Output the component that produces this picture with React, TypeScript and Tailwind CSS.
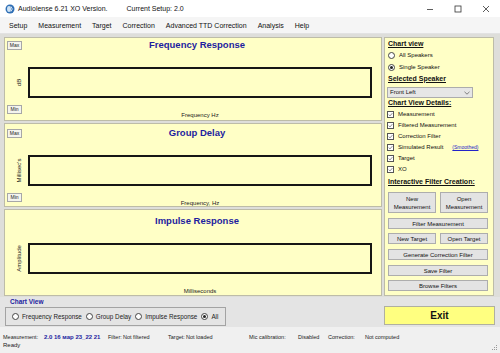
import React from 'react';

const sans = "font-['Liberation_Sans',Arial,sans-serif]";

function SmallBtn({ children, className = '' }: { children: React.ReactNode; className?: string }) {
  return (
    <div
      className={`w-[15px] h-[9px] border border-[#a7a7a7] bg-[#f4f4ee] text-[5px] leading-[7px] text-center text-[#222] ${className}`}
    >
      {children}
    </div>
  );
}

function WinBtn({ children, className = '' }: { children: React.ReactNode; className?: string }) {
  return (
    <div
      className={`flex items-center justify-center text-center border border-[#adadad] bg-[#e3e3e3] text-[6px] leading-[8px] text-[#111] ${className}`}
    >
      {children}
    </div>
  );
}

function Radio({ checked = false }: { checked?: boolean }) {
  return (
    <div className="w-[7px] h-[7px] rounded-full border border-[#444] bg-white flex items-center justify-center shrink-0">
      {checked && <div className="w-[3px] h-[3px] rounded-full bg-[#222]" />}
    </div>
  );
}

function Check() {
  return (
    <div className="w-[7px] h-[7px] border border-[#555] bg-white flex items-center justify-center shrink-0">
      <svg width="5" height="5" viewBox="0 0 10 10">
        <path d="M1.5 5.2 L4 7.8 L8.8 2.2" fill="none" stroke="#333" strokeWidth="1.1" />
      </svg>
    </div>
  );
}

interface ChartPanelProps {
  title: string;
  ylabel: string;
  xlabel: string;
  maxMin?: boolean;
  className: string;
}

function ChartPanel({ title, ylabel, xlabel, maxMin = true, className }: ChartPanelProps) {
  return (
    <div className={`flex flex-col border border-[#bdbca8] bg-[#ffffc6] ${className}`}>
      {/* Header */}
      <div className="flex h-[29px] shrink-0">
        <div className="w-[18px] shrink-0">{maxMin && <SmallBtn className="ml-[2px] mt-[3px]">Max</SmallBtn>}</div>
        <div className="flex-1 mr-[10px] mt-[1px] text-center text-[9.5px] leading-[12px] font-bold text-[#1d1d9f]">
          {title}
        </div>
      </div>

      {/* Plot */}
      <div className="flex h-[31px] shrink-0">
        <div className="w-[23px] pl-[6px] flex items-center justify-center shrink-0">
          <span className="-rotate-90 whitespace-nowrap text-[6px] leading-[7px] text-[#222]">{ylabel}</span>
        </div>
        <div className="flex-1 mr-[9px] border-2 border-[#161616]" />
      </div>

      {/* Footer */}
      <div className="flex shrink-0">
        <div className="w-[23px] shrink-0">{maxMin && <SmallBtn className="ml-[2px] mt-[7px]">Min</SmallBtn>}</div>
        <div className="flex-1 mr-[9px] mt-[13px] text-center text-[6px] leading-[8px] text-[#222]">{xlabel}</div>
      </div>
    </div>
  );
}

export default function App() {
  return (
    <div className={`w-[500px] h-[353px] overflow-hidden flex flex-col bg-[#f0f0f0] text-[#111] ${sans}`}>
      {/* Title bar */}
      <div className="h-[17px] shrink-0 bg-white flex items-center">
        <svg width="10" height="10" viewBox="0 0 20 20" className="ml-[5px]">
          <circle cx="10" cy="10" r="9" fill="#2f6fb5" />
          <ellipse cx="8" cy="10" rx="4" ry="6" fill="#cfe3f5" />
          <path d="M12 5 Q17 10 12 15" fill="none" stroke="#ffffff" strokeWidth="1.6" />
        </svg>
        <span className="ml-[3px] text-[7px] leading-[9px]">Audiolense 6.21 XO Version.</span>
        <span className="ml-[19px] text-[7px] leading-[9px]">Current Setup: 2.0</span>
        <div className="ml-auto flex items-center">
          <svg width="8" height="8" viewBox="0 0 8 8" className="mr-[20px]">
            <line x1="1" y1="4.5" x2="7" y2="4.5" stroke="#333" strokeWidth="0.8" />
          </svg>
          <svg width="8" height="8" viewBox="0 0 8 8" className="mr-[20px]">
            <rect x="1" y="1" width="6" height="6" fill="none" stroke="#333" strokeWidth="0.8" />
          </svg>
          <svg width="8" height="8" viewBox="0 0 8 8" className="mr-[10px]">
            <line x1="1" y1="1" x2="7" y2="7" stroke="#333" strokeWidth="0.8" />
            <line x1="7" y1="1" x2="1" y2="7" stroke="#333" strokeWidth="0.8" />
          </svg>
        </div>
      </div>

      {/* Menu bar */}
      <div className="h-[17px] shrink-0 bg-[#f5f5f5] flex items-center pl-[9px] gap-[11px] text-[7px] leading-[9px] border-b border-[#e2e2e2]">
        <span>Setup</span>
        <span>Measurement</span>
        <span>Target</span>
        <span>Correction</span>
        <span>Advanced TTD Correction</span>
        <span>Analysis</span>
        <span>Help</span>
      </div>

      {/* Main area */}
      <div className="h-[263px] shrink-0 flex pt-[3px] bg-[#dededa]">
        <div className="ml-[4px] w-[378px] flex flex-col gap-[2px]">
          <ChartPanel className="h-[84px]" title="Frequency Response" ylabel="dB" xlabel="Frequency Hz" />
          <ChartPanel className="h-[84px] pt-[2px]" title="Group Delay" ylabel="Millisec's" xlabel="Frequency, Hz" />
          <ChartPanel className="h-[87px] pt-[4px]" title="Impulse Response" ylabel="Amplitude" xlabel="Milliseconds" maxMin={false} />
        </div>

        {/* Right side panel */}
        <div className="ml-[2px] w-[110px] h-[259px] border border-[#bdbca8] bg-[#ffffc6] flex flex-col pt-[1px] pl-[3px] pr-[5px] text-[6px] text-[#111]">
          <div className="h-[11px] flex items-center text-[7px] font-bold underline">Chart view</div>
          <div className="h-[11px] flex items-center gap-[4px]">
            <Radio />
            <span>All Speakers</span>
          </div>
          <div className="h-[12px] flex items-center gap-[4px]">
            <Radio checked />
            <span>Single Speaker</span>
          </div>
          <div className="h-[12px] flex items-center text-[7px] font-bold underline">Selected Speaker</div>
          <div className="mt-[2px] -ml-[1px] w-[86px] h-[11px] border border-[#acacac] bg-[#e6e6e6] flex items-center justify-between px-[2px]">
            <span>Front Left</span>
            <svg width="6" height="4" viewBox="0 0 6 4">
              <path d="M0.5 0.8 L3 3.2 L5.5 0.8" fill="none" stroke="#555" strokeWidth="0.7" />
            </svg>
          </div>
          <div className="h-[11px] flex items-center text-[7px] font-bold underline">Chart View Details:</div>
          {['Measurement', 'Filtered Measurement', 'Correction Filter', 'Simulated Result', 'Target', 'XO'].map((label) => (
            <div key={label} className="h-[11px] flex items-center gap-[4px] -ml-[1px]">
              <Check />
              <span>{label}</span>
              {label === 'Simulated Result' && (
                <span className="ml-[5px] text-[5px] text-[#2323c8] underline">(Smoothed)</span>
              )}
            </div>
          ))}
          <div className="h-[14px] flex items-center text-[7px] font-bold underline">Interactive Filter Creation:</div>
          <div className="mt-[3px] grid grid-cols-2 gap-[4px] h-[21px]">
            <WinBtn>
              New
              <br />
              Measurement
            </WinBtn>
            <WinBtn>
              Open
              <br />
              Measurement
            </WinBtn>
          </div>
          <WinBtn className="mt-[5px] h-[11px]">Filter Measurement</WinBtn>
          <div className="mt-[4px] grid grid-cols-2 gap-[4px] h-[11px]">
            <WinBtn>New Target</WinBtn>
            <WinBtn>Open Target</WinBtn>
          </div>
          <WinBtn className="mt-[5px] h-[11px]">Generate Correction Filter</WinBtn>
          <WinBtn className="mt-[5px] h-[11px]">Save Filter</WinBtn>
          <WinBtn className="mt-[4px] h-[11px]">Browse Filters</WinBtn>
        </div>
      </div>

      {/* Bottom controls */}
      <div className="h-[30px] shrink-0 flex bg-[#e4e4e4]">
        <div className="ml-[5px] w-[221px] flex flex-col">
          <div className="ml-[5px] mt-[1px] text-[6.5px] leading-[8px] font-bold text-[#1d1d9f]">Chart View</div>
          <div className="mt-[1px] h-[19px] border border-[#a3a3a3] flex items-center pl-[6px] text-[6.3px] leading-[8px] text-[#222]">
            <Radio />
            <span className="ml-[3px]">Frequency Response</span>
            <div className="ml-[4px]">
              <Radio />
            </div>
            <span className="ml-[3px]">Group Delay</span>
            <div className="ml-[4px]">
              <Radio />
            </div>
            <span className="ml-[3px]">Impulse Response</span>
            <div className="ml-[4px]">
              <Radio checked />
            </div>
            <span className="ml-[3px]">All</span>
          </div>
        </div>
        <div className="ml-auto mr-[5px] mt-[9px] w-[111px] h-[19px] border border-[#b0b0a0] bg-[#ffff80] flex items-center justify-center text-[10px] font-bold text-[#111]">
          Exit
        </div>
      </div>

      {/* Status */}
      <div className="flex-1 bg-[#f0f0f0] flex flex-col relative">
        <div className="pt-[6px] pl-[3px] flex items-center text-[5.5px] leading-[9px] text-[#222] whitespace-nowrap">
          <span className="w-[41px]">Measurement:</span>
          <span className="w-[64px] text-[6px] font-bold text-[#1d1d9f]">2.0 16 мар 23_22 21</span>
          <span className="w-[15px]">Filter:</span>
          <span className="w-[45px]">Not filtered</span>
          <span className="w-[18px]">Target:</span>
          <span className="w-[63px]">Not loaded</span>
          <span className="w-[49px]">Mic calibration:</span>
          <span className="w-[30px]">Disabled</span>
          <span className="w-[37px]">Correction:</span>
          <span>Not computed</span>
        </div>
        <div className="-mt-[1px] pl-[3px] text-[6px] leading-[8px] text-[#222]">Ready</div>
        <svg width="6" height="6" viewBox="0 0 6 6" className="absolute right-[2px] bottom-[2px]">
          <rect x="4" y="0" width="1" height="1" fill="#999" />
          <rect x="2" y="2" width="1" height="1" fill="#999" />
          <rect x="4" y="2" width="1" height="1" fill="#999" />
          <rect x="0" y="4" width="1" height="1" fill="#999" />
          <rect x="2" y="4" width="1" height="1" fill="#999" />
          <rect x="4" y="4" width="1" height="1" fill="#999" />
        </svg>
      </div>
    </div>
  );
}
